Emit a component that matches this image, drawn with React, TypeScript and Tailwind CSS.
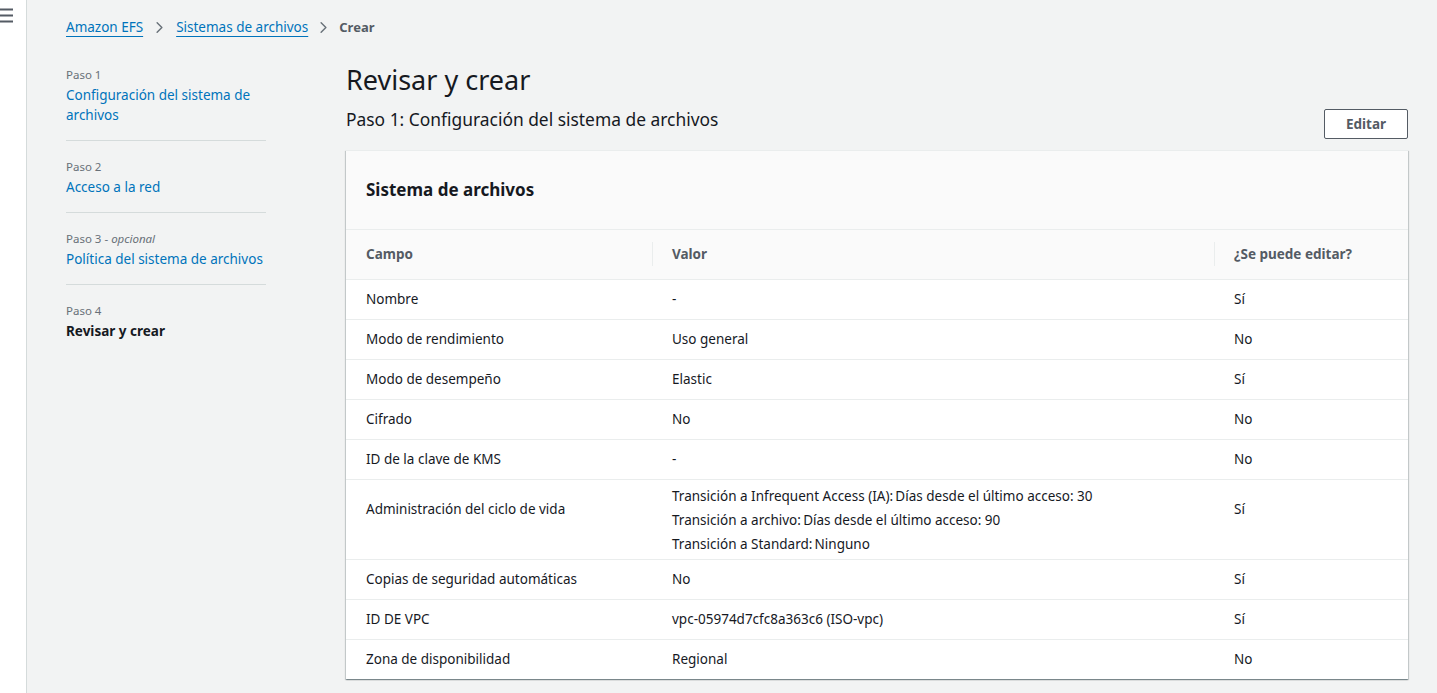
import { ChevronRight } from 'lucide-react'

const rows: { field: string; value: string[]; editable: string }[] = [
  { field: 'Nombre', value: ['-'], editable: 'Sí' },
  { field: 'Modo de rendimiento', value: ['Uso general'], editable: 'No' },
  { field: 'Modo de desempeño', value: ['Elastic'], editable: 'Sí' },
  { field: 'Cifrado', value: ['No'], editable: 'No' },
  { field: 'ID de la clave de KMS', value: ['-'], editable: 'No' },
  {
    field: 'Administración del ciclo de vida',
    value: [
      'Transición a Infrequent Access (IA):\u2009Días desde el último acceso: 30',
      'Transición a archivo:\u2009Días desde el último acceso: 90',
      'Transición a Standard:\u2009Ninguno',
    ],
    editable: 'Sí',
  },
  { field: 'Copias de seguridad automáticas', value: ['No'], editable: 'Sí' },
  { field: 'ID DE VPC', value: ['vpc-05974d7cfc8a363c6 (ISO-vpc)'], editable: 'Sí' },
  { field: 'Zona de disponibilidad', value: ['Regional'], editable: 'No' },
]

const steps = [
  { label: 'Paso 1', title: 'Configuración del sistema de archivos', link: true },
  { label: 'Paso 2', title: 'Acceso a la red', link: true },
  { label: 'Paso 3', optional: true, title: 'Política del sistema de archivos', link: true },
  { label: 'Paso 4', title: 'Revisar y crear', link: false },
]

function Breadcrumbs() {
  return (
    <nav className="flex items-center text-[13.5px] leading-[20px] pt-[17px]">
      <a className="text-[#0073bb] underline underline-offset-[4px] decoration-[#0073bb]">Amazon EFS</a>
      <ChevronRight className="mx-[7px] text-[#687078]" size={19} strokeWidth={1.8} />
      <a className="text-[#0073bb] underline underline-offset-[4px] decoration-[#0073bb]">Sistemas de archivos</a>
      <ChevronRight className="mx-[6px] text-[#687078]" size={19} strokeWidth={1.8} />
      <span className="text-[#545b64] font-bold text-[13px]">Crear</span>
    </nav>
  )
}

function StepNav() {
  return (
    <ul className="w-[200px] shrink-0 pt-[30px]">
      {steps.map((s, i) => (
        <li
          key={s.label}
          className={`${i < steps.length - 1 ? 'border-b border-[#d5dbdb] pb-[15px] mb-[18px]' : ''}`}
        >
          <div className="text-[11.5px] leading-[16px] text-[#687078]">
            {s.label}
            {s.optional && (
              <>
                {' - '}
                <i>opcional</i>
              </>
            )}
          </div>
          <div
            className={`mt-[2px] text-[13.5px] leading-[20px] ${
              s.link ? 'text-[#0073bb]' : 'text-[#16191f] font-bold'
            }`}
          >
            {s.title}
          </div>
        </li>
      ))}
    </ul>
  )
}

export default function App() {
  return (
    <div
      className="flex min-h-[693px] bg-[#f2f3f3] text-[#16191f]"
      style={{ fontFamily: '"Noto Sans", "Open Sans", sans-serif' }}
    >
      <div className="w-[27px] shrink-0 bg-white border-r border-[#d5dbdb] relative">
        <svg className="absolute left-[-2px] top-[8px]" width="16" height="16" viewBox="0 0 16 16">
          <path d="M0 1.5h15M0 7.5h15M0 13.5h15" stroke="#545b64" strokeWidth="1.8" />
        </svg>
      </div>

      <div className="flex-1 pl-[39px] pr-[29px]">
        <Breadcrumbs />
        <div className="flex">
          <StepNav />
          <main className="flex-1 ml-[80px] pt-[25px]">
            <h1 className="text-[27px] leading-[36px] font-normal text-[#16191f]">Revisar y crear</h1>
            <div className="flex items-start justify-between mt-[8px]">
              <h2 className="text-[17.4px] leading-[26px] text-[#16191f]">
                Paso 1: Configuración del sistema de archivos
              </h2>
              <button className="mt-[3px] h-[30px] px-[21px] border border-[#545b64] rounded-[2px] bg-white text-[#545b64] text-[13.5px] font-bold">
                Editar
              </button>
            </div>

            <section className="mt-[11px] bg-white border-t border-[#eaeded] shadow-[0_1px_1px_0_rgba(0,28,36,0.3),1px_1px_1px_0_rgba(0,28,36,0.15),-1px_1px_1px_0_rgba(0,28,36,0.15)]">
              <div className="h-[79px] bg-[#fafafa] border-b border-[#eaeded] px-[20px] flex items-center">
                <h3 className="text-[17px] font-bold text-[#16191f]">Sistema de archivos</h3>
              </div>
              <table className="w-full border-collapse text-[13.5px]">
                <thead>
                  <tr className="h-[49px] bg-[#fafafa] border-b border-[#eaeded]">
                    <th className="w-[307px] text-left font-bold text-[#545b64] pl-[20px]">
                      <div className="border-r border-[#eaeded] leading-[24px]">Campo</div>
                    </th>
                    <th className="w-[562px] text-left font-bold text-[#545b64] pl-[19px]">
                      <div className="border-r border-[#eaeded] leading-[24px]">Valor</div>
                    </th>
                    <th className="text-left font-bold text-[#545b64] pl-[19px]">¿Se puede editar?</th>
                  </tr>
                </thead>
                <tbody>
                  {rows.map((r) => {
                    const multi = r.value.length > 1
                    const side = multi ? 'align-top pt-[18px]' : 'align-middle py-[8px]'
                    return (
                      <tr key={r.field} className="border-b border-[#eaeded] last:border-b-0">
                        <td className={`pl-[20px] leading-[23px] ${side}`}>{r.field}</td>
                        <td
                          className={`pl-[19px] align-middle ${
                            multi ? 'pt-[4px] pb-[3px] leading-[24px]' : 'py-[8px] leading-[23px]'
                          }`}
                        >
                          {r.value.map((v) => (
                            <div key={v}>{v}</div>
                          ))}
                        </td>
                        <td className={`pl-[19px] leading-[23px] ${side}`}>{r.editable}</td>
                      </tr>
                    )
                  })}
                </tbody>
              </table>
            </section>
          </main>
        </div>
      </div>
    </div>
  )
}
